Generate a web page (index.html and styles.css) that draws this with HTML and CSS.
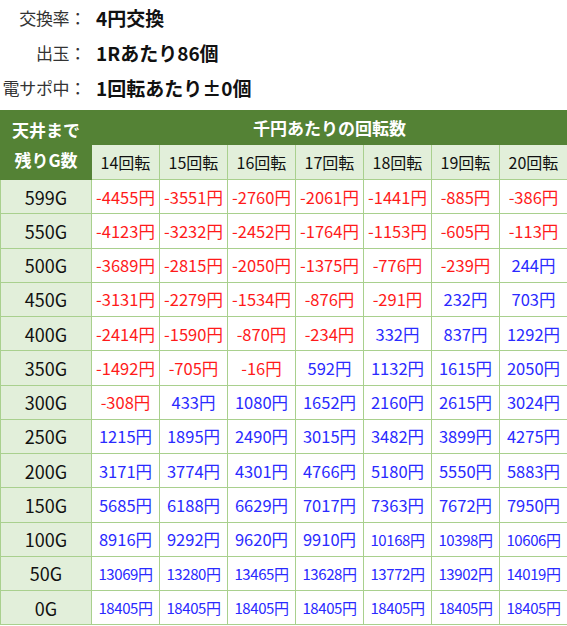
FILE: index.html
```html
<!DOCTYPE html>
<html lang="ja">
<head>
<meta charset="utf-8">
<link rel="stylesheet" href="styles.css">
</head>
<body>
<div class="info">
  <div class="info-row"><span class="label">交換率：</span><span class="value">4円交換</span></div>
  <div class="info-row"><span class="label">出玉：</span><span class="value">1Rあたり86個</span></div>
  <div class="info-row"><span class="label">電サポ中：</span><span class="value">1回転あたり±0個</span></div>
</div>
<table class="tbl">
  <colgroup>
    <col class="c-first">
    <col span="7" class="c-data">
  </colgroup>
  <tr class="h1">
    <th rowspan="2" class="corner">天井まで<br>残りG数</th>
    <th colspan="7" class="title">千円あたりの回転数</th>
  </tr>
  <tr class="h2">
    <th>14回転</th><th>15回転</th><th>16回転</th><th>17回転</th><th>18回転</th><th>19回転</th><th>20回転</th>
  </tr>
  <tr><th>599G</th><td class="neg">-4455円</td><td class="neg">-3551円</td><td class="neg">-2760円</td><td class="neg">-2061円</td><td class="neg">-1441円</td><td class="neg">-885円</td><td class="neg">-386円</td></tr>
  <tr><th>550G</th><td class="neg">-4123円</td><td class="neg">-3232円</td><td class="neg">-2452円</td><td class="neg">-1764円</td><td class="neg">-1153円</td><td class="neg">-605円</td><td class="neg">-113円</td></tr>
  <tr><th>500G</th><td class="neg">-3689円</td><td class="neg">-2815円</td><td class="neg">-2050円</td><td class="neg">-1375円</td><td class="neg">-776円</td><td class="neg">-239円</td><td class="pos">244円</td></tr>
  <tr><th>450G</th><td class="neg">-3131円</td><td class="neg">-2279円</td><td class="neg">-1534円</td><td class="neg">-876円</td><td class="neg">-291円</td><td class="pos">232円</td><td class="pos">703円</td></tr>
  <tr><th>400G</th><td class="neg">-2414円</td><td class="neg">-1590円</td><td class="neg">-870円</td><td class="neg">-234円</td><td class="pos">332円</td><td class="pos">837円</td><td class="pos">1292円</td></tr>
  <tr><th>350G</th><td class="neg">-1492円</td><td class="neg">-705円</td><td class="neg">-16円</td><td class="pos">592円</td><td class="pos">1132円</td><td class="pos">1615円</td><td class="pos">2050円</td></tr>
  <tr><th>300G</th><td class="neg">-308円</td><td class="pos">433円</td><td class="pos">1080円</td><td class="pos">1652円</td><td class="pos">2160円</td><td class="pos">2615円</td><td class="pos">3024円</td></tr>
  <tr><th>250G</th><td class="pos">1215円</td><td class="pos">1895円</td><td class="pos">2490円</td><td class="pos">3015円</td><td class="pos">3482円</td><td class="pos">3899円</td><td class="pos">4275円</td></tr>
  <tr><th>200G</th><td class="pos">3171円</td><td class="pos">3774円</td><td class="pos">4301円</td><td class="pos">4766円</td><td class="pos">5180円</td><td class="pos">5550円</td><td class="pos">5883円</td></tr>
  <tr><th>150G</th><td class="pos">5685円</td><td class="pos">6188円</td><td class="pos">6629円</td><td class="pos">7017円</td><td class="pos">7363円</td><td class="pos">7672円</td><td class="pos">7950円</td></tr>
  <tr><th>100G</th><td class="pos">8916円</td><td class="pos">9292円</td><td class="pos">9620円</td><td class="pos">9910円</td><td class="pos small">10168円</td><td class="pos small">10398円</td><td class="pos small">10606円</td></tr>
  <tr><th>50G</th><td class="pos small">13069円</td><td class="pos small">13280円</td><td class="pos small">13465円</td><td class="pos small">13628円</td><td class="pos small">13772円</td><td class="pos small">13902円</td><td class="pos small">14019円</td></tr>
  <tr><th>0G</th><td class="pos small">18405円</td><td class="pos small">18405円</td><td class="pos small">18405円</td><td class="pos small">18405円</td><td class="pos small">18405円</td><td class="pos small">18405円</td><td class="pos small">18405円</td></tr>
</table>
</body>
</html>
```
FILE: styles.css
```css
html, body {
  margin: 0;
  padding: 0;
  background: #ffffff;
}
body {
  font-family: "Noto Sans CJK JP", "Noto Sans", sans-serif;
  color: #111111;
}
.info {
  margin-bottom: 5px;
}
.info-row {
  display: flex;
  align-items: center;
  height: 35px;
  font-size: 17px;
}
.label {
  width: 86px;
  text-align: right;
  color: #333333;
  letter-spacing: -0.3px;
}
.value {
  margin-left: 10px;
  font-weight: bold;
  font-size: 19px;
  color: #111111;
}
.tbl {
  border-collapse: collapse;
  width: 567px;
  table-layout: fixed;
  font-size: 16.5px;
}
.c-first { width: 91px; }
.c-data { width: 68px; }
.tbl th, .tbl td {
  border: 1px solid #a9d08e;
  text-align: center;
  padding: 0;
  white-space: nowrap;
  overflow: hidden;
}
.tbl tr { height: 34.25px; }
.tbl .h1 { height: 34px; }
.tbl .h2 { height: 35px; }
.tbl th {
  font-weight: normal;
  background: #e2efda;
  color: #111111;
  font-size: 18px;
}
.tbl .h1 th {
  background: #548235;
  color: #ffffff;
  font-weight: bold;
  font-size: 17px;
  border-color: #548235;
}
.tbl .corner {
  line-height: 30px;
  border-right-color: #a9d08e;
}
.tbl .h2 th {
  font-size: 16px;
}
.tbl td {
  background: #ffffff;
}
.neg { color: #ff1a1a; }
.pos { color: #2a2aff; }
.small {
  font-size: 15px;
  letter-spacing: -0.4px;
}
```
